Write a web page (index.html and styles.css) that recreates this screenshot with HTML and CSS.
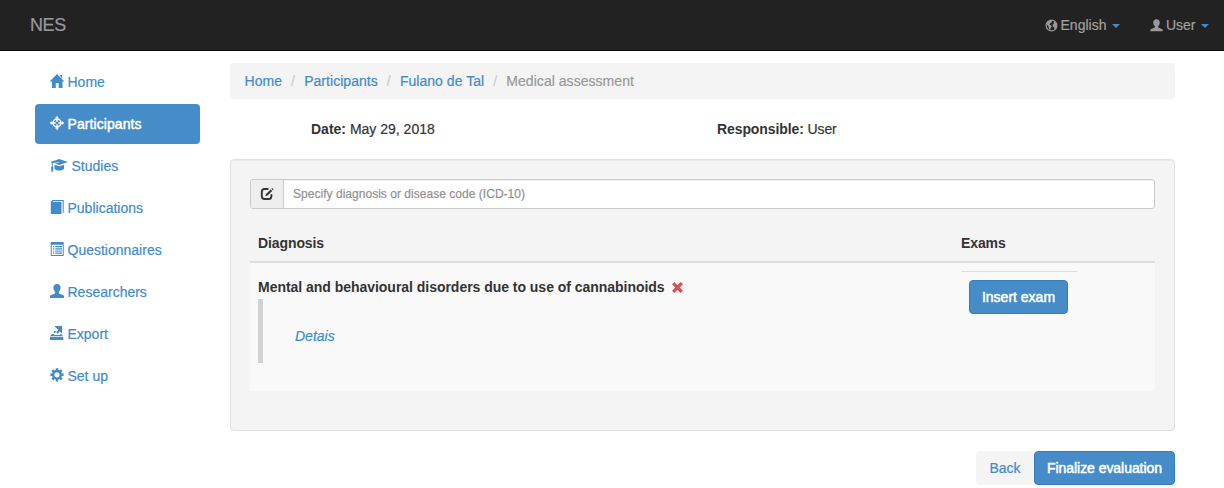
FILE: index.html
```html
<!DOCTYPE html>
<html lang="en">
<head>
<meta charset="utf-8">
<title>NES</title>
<link rel="stylesheet" href="styles.css">
</head>
<body>
<header class="navbar">
  <a class="brand">NES</a>
  <div class="navbar-menu">
    <a class="menu-link"><svg class="icon-sm" viewBox="0 0 14 14"><circle cx="7" cy="7" r="5.8" fill="none" stroke="currentColor" stroke-width="1.3"/><path fill="currentColor" d="M1.5 5.2 3.6 2.3 6.3 1.4 7.6 2.2 6.900 4 5.400 4.600 4.800 6 6.600 7.100 7.300 8.400 6.100 10 5.400 12.200 4.200 10.200 3.800 8zM9.600 2.500 11.200 3.300 12.700 6 12.300 9.400 10.400 11.600 9.800 9.200 8.400 7.800 8.200 5.900 9.400 5z"/></svg><span>English</span><i class="caret"></i></a>
    <a class="menu-link"><svg class="icon-sm" viewBox="0 0 14 14"><path fill="currentColor" d="M7 .3c2.300 0 3.500 1.400 3.500 3.500 0 1.800-.7 3.100-1.700 4v1.400l3.900 1.600c.7.300 1 .8 1 1.600v.9H.3v-.9c0-.8.3-1.300 1-1.600l3.900-1.600V7.800c-1-.9-1.700-2.200-1.700-4C3.500 1.700 4.700.3 7 .3z"/></svg><span>User</span><i class="caret"></i></a>
  </div>
</header>
<div class="page">
  <nav class="sidebar">
    <a class="nav-item"><svg class="icon" viewBox="0 0 14 14"><path fill="currentColor" d="M7 0 14.500 7.500H12.500V14H8.700V9H5.800V14H2V7.500H-.5L7 0zM10.300 1h1.700v3l-1.700-1.500z"/></svg>Home</a>
    <a class="nav-item active"><svg class="icon" viewBox="0 0 14 14"><g fill="none" stroke="currentColor"><circle cx="7" cy="7" r="3.900" stroke-width="1.500"/><path stroke-width="1.500" d="M7 1v4.800M7 8.200V13M1 7h4.800M8.200 7H13"/></g><path fill="currentColor" d="M7-.3 9 2.200H5zM7 14.300 5 11.800h4zM-.3 7 2.200 5v4zM14.300 7 11.800 9V5z"/></svg>Participants</a>
    <a class="nav-item"><svg class="icon icon-wide" viewBox="0 0 17 14"><path fill="currentColor" d="M0 3.900 8.700.9l8.800 3-8.800 3-4.300-1.500 4-.8-.2-.6-6 1.200v3.300l.7.700-.4 4.500H.900L.6 9.300l.7-.7V4.700zM4 6.700l4.700 1.600 4.900-1.600v4c-1 1.300-2.900 1.900-4.900 1.900S4.900 12 4 10.700z"/></svg>Studies</a>
    <a class="nav-item"><svg class="icon" viewBox="0 0 14 14"><path fill="currentColor" d="M.8 1.500 2.500 0h11.200v12.500l-1 .8V1H3.200l-.9.800h9.200V14H.8z"/></svg>Publications</a>
    <a class="nav-item"><svg class="icon" viewBox="0 0 14 14"><path fill="currentColor" fill-rule="evenodd" d="M.7 0h13v14H.7zM1.700 2.700V13h11V2.700z"/><path fill="currentColor" d="M3 4h1.200v1.200H3zM5.200 4H12v1.200H5.200zM3 6.200h1.200v1.200H3zM5.200 6.200H12v1.200H5.200zM3 8.400h1.200v1.200H3zM5.200 8.400H12v1.200H5.200zM3 10.600h1.200v1.200H3zM5.200 10.600H12v1.200H5.200z"/></svg>Questionnaires</a>
    <a class="nav-item"><svg class="icon" viewBox="0 0 14 14"><path fill="currentColor" d="M7 0c2.300 0 3.600 1.500 3.600 3.600 0 1.800-.7 3.200-1.700 4.100v1.700l4.100 1.700c.7.300 1 .9 1 1.900v1H0v-1c0-1 .3-1.600 1-1.900l4.100-1.700V7.700c-1-.9-1.700-2.300-1.700-4.100C3.400 1.500 4.700 0 7 0z"/></svg>Researchers</a>
    <a class="nav-item"><svg class="icon" viewBox="0 0 14 14"><path fill="currentColor" d="M4.200 0H12v7.700L9.900 5.600 7.800 7.700 6.200 6.100l2.100-2zM4.800 4.500l1.500 1.300-1.600 1.400L3.400 6zM1.700 8h2.600l-.4 1h6.700l-.5-1h1.300l1.500 2.300H.2zM0 11h13.300v3H0z"/></svg>Export</a>
    <a class="nav-item"><svg class="icon" viewBox="0 0 14 14"><circle cx="7" cy="6.800" r="3.800" fill="none" stroke="currentColor" stroke-width="2.400"/><path fill="none" stroke="currentColor" stroke-width="2.500" d="M7 .2v2.300M7 11.100v2.300M.4 6.800h2.300M11.300 6.800h2.300M2.300 2.100l1.600 1.600M10.100 9.900l1.600 1.600M11.700 2.100l-1.600 1.600M3.900 9.900l-1.600 1.600"/></svg>Set up</a>
  </nav>
  <main class="content">
    <ol class="breadcrumb"><li><a>Home</a></li><li><a>Participants</a></li><li><a>Fulano de Tal</a></li><li class="current">Medical assessment</li></ol>
    <div class="summary">
      <div><b>Date:</b> May 29, 2018</div>
      <div class="responsible"><b>Responsible:</b> User</div>
    </div>
    <section class="well">
      <div class="input-group">
        <span class="addon"><svg class="icon-edit" viewBox="0 0 14 14"><path fill="none" stroke="currentColor" stroke-width="1.900" d="M8.500 2H4.500Q1.800 2 1.800 4.700v4.600Q1.800 12 4.500 12h4.300q2.600 0 2.600-2.700V7.200"/><path fill="currentColor" d="m6 7.100 4.700-4.700 1.500 1.500-4.700 4.700-2.200.7zM11.300 1.800l.9-.9 1.500 1.500-.9.900z"/></svg></span>
        <input class="code-input" type="text" placeholder="Specify diagnosis or disease code (ICD-10)">
      </div>
      <div class="table">
        <div class="table-row table-head"><span>Diagnosis</span><span>Exams</span></div>
        <div class="table-row table-body">
          <div>
            <div class="diagnosis"><b>Mental and behavioural disorders due to use of cannabinoids</b><svg class="remove" viewBox="0 0 12 12"><path fill="none" stroke="currentColor" stroke-width="3.600" d="m1.300 1.300 9.400 9.400M10.700 1.300l-9.400 9.400"/></svg></div>
            <div class="details"><a>Detais</a></div>
          </div>
          <div class="exams"><a class="btn btn-primary">Insert exam</a></div>
        </div>
      </div>
    </section>
    <div class="actions"><a class="btn btn-back">Back</a><a class="btn btn-primary btn-finalize">Finalize evaluation</a></div>
  </main>
</div>
</body>
</html>
```
FILE: styles.css
```css
* { box-sizing: border-box; }
body { margin: 0; height: 488px; overflow: hidden; background: #fff; color: #333; font: 14px/20px "Liberation Sans", Arial, sans-serif; -webkit-text-stroke: .2px; }
b, .table-head { -webkit-text-stroke: 0; }
a { color: #428bca; text-decoration: none; }
.navbar { display: flex; justify-content: space-between; height: 51px; padding: 15px 15px 15px 30px; background: #222; border-bottom: 1px solid #080808; }
.brand { color: #999; font-size: 18px; letter-spacing: -.4px; }
.navbar-menu { display: flex; gap: 30px; }
.menu-link { display: flex; align-items: center; color: #999; }
.menu-link span { margin-left: 3px; color: #a0a0a0; }
.icon-sm { width: 13px; height: 13px; }
.caret { margin: 2px 0 0 5.5px; border: 4px solid transparent; border-top-color: #428bca; border-bottom: 0; }
.page { display: flex; gap: 30px; padding: 11px 49px 0 35px; }
.sidebar { display: flex; flex-direction: column; gap: 2px; width: 165px; }
.nav-item { display: flex; align-items: center; gap: 4px; height: 40px; padding: 0 14.5px; border-radius: 4px; color: #428bca; }
.nav-item.active { background: #468cc8; color: #fff; letter-spacing: .08px; -webkit-text-stroke: .45px #fff; }
.icon { width: 14px; height: 14px; overflow: visible; margin-top: -2px; }
.icon-wide { width: 18px; }
.content { flex: 1; padding-top: 1px; }
.breadcrumb { display: flex; list-style: none; margin: 0; padding: 8px 14.5px; height: 36px; border-radius: 4px; background: #f4f4f4; letter-spacing: .04px; }
.breadcrumb li + li::before { content: "/"; padding: 0 9.1px; color: #ccc; }
.breadcrumb .current { color: #999; }
.summary { display: grid; grid-template-columns: 406px 1fr; padding: 20px 0 20px 81px; }
.responsible { letter-spacing: -.1px; }
.well { height: 272px; padding: 19px; background: #f4f4f4; border: 1px solid #e1e1e1; border-radius: 4px; box-shadow: inset 0 1px 1px rgba(0,0,0,.05); }
.input-group { display: flex; height: 30px; border: 1px solid #c9c9c9; border-radius: 3px; background: #fff; box-shadow: inset 0 1px 1px rgba(0,0,0,.05); overflow: hidden; }
.addon { display: flex; align-items: center; justify-content: center; width: 33px; background: #eee; border-right: 1px solid #ccc; }
.icon-edit { width: 14px; height: 14px; }
.code-input { flex: 1; border: 0; padding: 0 9px; background: none; font: 12px "Liberation Sans", Arial, sans-serif; letter-spacing: .03px; }
.code-input::placeholder { color: #909090; opacity: 1; }
.table { margin-top: 16px; }
.table-row { display: grid; grid-template-columns: 703px 1fr; padding: 8px; }
.table-head { height: 38px; border-bottom: 2px solid #ddd; font-weight: bold; letter-spacing: -.1px; }
.table-body { height: 128px; background: #f9f9f9; }
.diagnosis { display: flex; align-items: center; gap: 7px; height: 20px; margin-top: 6px; letter-spacing: -.03px; }
.remove { width: 11px; height: 11px; color: #d05355; }
.details { height: 64px; margin-top: 2px; padding: 27px 0 0 32px; border-left: 5px solid #d2d2d2; font-style: italic; }
.exams { width: 116px; padding: 8px; border-top: 1px solid #ddd; }
.btn { display: flex; align-items: center; justify-content: center; height: 34px; border-radius: 4px; }
.btn-primary { width: 99px; border: 1px solid #357ebd; background: #468cc8; color: #fff; -webkit-text-stroke: .5px #fff; }
.actions { display: flex; justify-content: flex-end; margin-top: 20px; }
.btn-back { width: 58px; background: #f4f4f4; }
.btn-finalize { width: 141px; letter-spacing: -.05px; }
```
